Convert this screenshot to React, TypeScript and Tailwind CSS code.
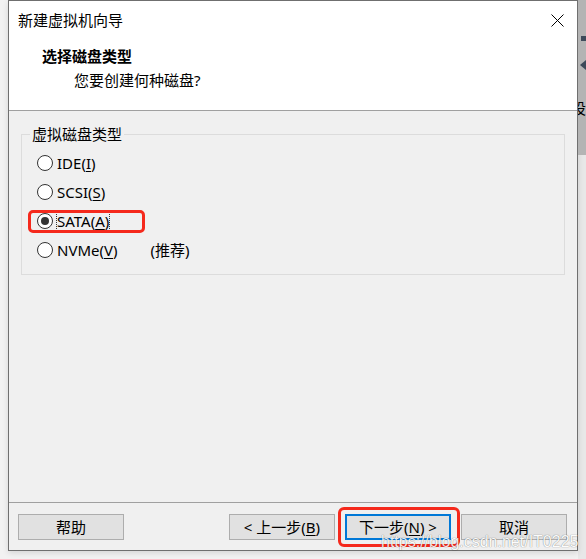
import React from "react";

const font = { fontFamily: '"Noto Sans","Noto Sans CJK SC",sans-serif' };

function Radio({ checked }: { checked?: boolean }) {
  return (
    <span className="w-[16px] h-[16px] rounded-full border border-[#333333] bg-white flex items-center justify-center shrink-0">
      {checked && <span className="w-[8px] h-[8px] rounded-full bg-[#333333]" />}
    </span>
  );
}

function Row({ children, checked, extra }: { children: React.ReactNode; checked?: boolean; extra?: React.ReactNode }) {
  return (
    <div className="relative h-[29px] pl-[15px] flex items-center gap-[4px]">
      <Radio checked={checked} />
      {children}
      {extra}
    </div>
  );
}

function Btn({ children, focused }: { children: React.ReactNode; focused?: boolean }) {
  return (
    <div
      className={
        "w-[106px] h-[26px] flex items-center justify-center bg-[#e1e1e1] text-[15px] leading-[20px] text-black " +
        (focused ? "border-2 border-[#0078d7]" : "border border-[#adadad]")
      }
    >
      {children}
    </div>
  );
}

export default function App() {
  return (
    <div className="w-[586px] h-[559px] bg-[#f2f2f2] flex overflow-hidden" style={font}>
      <div className="w-[8px] shrink-0" />
      <div className="relative w-[570px] h-[551px] shrink-0 border border-[#6f6f6f] flex flex-col bg-[#f0f0f0] shadow-[0_2px_6px_rgba(0,0,0,0.12)]">
        {/* header white */}
        <div className="h-[109px] bg-white shrink-0">
          <div className="h-[38px] flex items-center justify-between pl-[9px] pr-[13px]">
            <span className="text-[15px] leading-[20px] text-black">新建虚拟机向导</span>
            <svg width="13" height="13" viewBox="0 0 13 13">
              <path d="M0.5 0.5 L12.5 12.5 M12.5 0.5 L0.5 12.5" stroke="#000" strokeWidth="1" fill="none" />
            </svg>
          </div>
          <div className="mt-[7px] pl-[33px] text-[15px] leading-[20px] font-bold text-black">选择磁盘类型</div>
          <div className="mt-[4px] pl-[65px] text-[15px] leading-[20px] text-black">您要创建何种磁盘?</div>
        </div>
        <div className="h-[1px] bg-[#a0a0a0] shrink-0" />
        {/* body */}
        <div className="h-[391px] shrink-0 pt-[13px] px-[12px]">
          <fieldset className="border border-[#dcdcdc] pt-[4px] pb-[10px] text-[15px] leading-[20px] text-black">
            <legend className="ml-[8px] px-[2px] leading-[20px]">虚拟磁盘类型</legend>
            <Row>
              <span>
                IDE(<span className="underline underline-offset-2">I</span>)
              </span>
            </Row>
            <Row>
              <span>
                SCSI(<span className="underline underline-offset-2">S</span>)
              </span>
            </Row>
            <Row
              checked
              extra={
                <div className="absolute left-[6px] top-[4px] w-[117px] h-[23px] border-[3px] border-[#f5291c] rounded-[5px]" />
              }
            >
              <span className="border border-dotted border-[#333] -ml-[1px] px-0 leading-[18px]">
                SATA(<span className="underline underline-offset-2">A</span>)
              </span>
            </Row>
            <Row>
              <span>
                NVMe(<span className="underline underline-offset-2">V</span>)
              </span>
              <span className="ml-[29px]">(推荐)</span>
            </Row>
          </fieldset>
        </div>
        <div className="h-[1px] bg-[#a0a0a0] shrink-0" />
        {/* footer */}
        <div className="flex-1 flex items-start justify-between pt-[11px] pl-[9px] pr-[10px]">
          <Btn>帮助</Btn>
          <div className="flex gap-[10px]">
            <Btn>
              &lt; 上一步(<span className="underline underline-offset-2">B</span>)
            </Btn>
            <div className="relative">
              <Btn focused>
                下一步(<span className="underline underline-offset-2">N</span>) &gt;
              </Btn>
              <div className="absolute -left-[7px] -top-[7px] w-[122px] h-[40px] border-[3px] border-[#f5291c] rounded-[6px]" />
            </div>
            <Btn>取消</Btn>
          </div>
        </div>
        <div
          className="absolute left-[372px] top-[531px] text-[16px] leading-[20px] text-white"
          style={{
            fontFamily: '"Liberation Sans",Arial,sans-serif',
            textShadow: "0 0 1px rgba(0,0,0,0.45), 0 0 1px rgba(0,0,0,0.3)",
            opacity: 0.85,
          }}
        >
          https://blog.csdn.net/IT0225
        </div>
      </div>
      <div className="w-[8px] shrink-0 flex flex-col">
        <div className="h-[155px] bg-[#b4b4b4] relative">
          <div className="absolute left-[3px] top-[36px] w-[5px] h-[5px] bg-[#3d4a5a]" />
          <div className="absolute left-[2px] top-[60px] w-0 h-0 border-y-[5px] border-y-transparent border-r-[6px] border-r-[#3d4a5a]" />
          <div className="absolute left-[0px] top-[98px] text-[15px] leading-[20px] text-black overflow-hidden w-[8px]">
            <span className="-ml-[7px] block">设</span>
          </div>
        </div>
        <div className="flex-1 bg-[#e8e8e8]" />
      </div>
    </div>
  );
}
